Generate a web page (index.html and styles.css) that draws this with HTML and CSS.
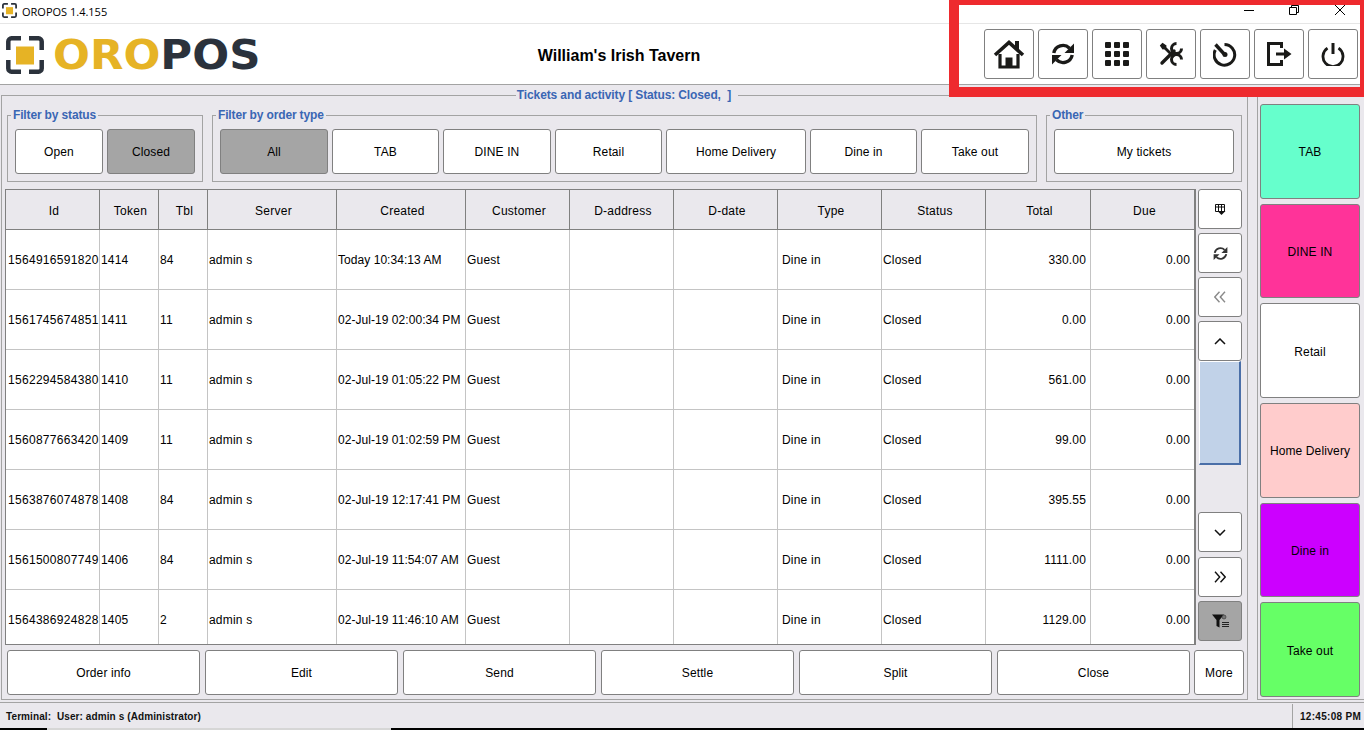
FILE: index.html
```html
<!DOCTYPE html>
<html lang="en">
<head>
<meta charset="utf-8">
<title>OROPOS 1.4.155</title>
<link rel="stylesheet" href="styles.css">
</head>
<body>
<svg class="defs" width="0" height="0" aria-hidden="true">
  <symbol id="logo-mark" viewBox="0 0 38 38">
    <path d="M2.3 14V5.5a3.2 3.2 0 0 1 3.2-3.2H15M23 2.300H32.500a3.2 3.2 0 0 1 3.2 3.200V14M35.700 24V32.500a3.200 3.200 0 0 1-3.200 3.200H23M15 35.700H5.500a3.200 3.200 0 0 1-3.200-3.200V24" fill="none" stroke="#2b323c" stroke-width="4.500"/>
    <rect x="10" y="10.500" width="18" height="18" fill="#e6b325"/>
  </symbol>
</svg>
<div class="app">
  <div class="titlebar">
    <svg class="title-icon"><use href="#logo-mark"/></svg>
    <span class="title-text">OROPOS 1.4.155</span>
    <div class="winctl">
      <span class="winbtn"><svg width="10" height="10" viewBox="0 0 10 10"><path d="M0 5.500H10" stroke="#000" fill="none"/></svg></span>
      <span class="winbtn"><svg width="10" height="10" viewBox="0 0 10 10"><path d="M.5 2.500H7.500V9.500H.5ZM2.500 2.500V.5H9.500V7.500H7.500" stroke="#000" fill="none"/></svg></span>
      <span class="winbtn"><svg width="10" height="10" viewBox="0 0 10 10"><path d="M0 0L10 10M10 0L0 10" stroke="#000" stroke-width="1" fill="none"/></svg></span>
    </div>
  </div>
  <header class="header">
    <div class="logo">
      <svg class="logo-mark"><use href="#logo-mark"/></svg>
      <span class="logo-word"><span class="gold">ORO</span><span class="dark">POS</span></span>
    </div>
    <div class="venue">William's Irish Tavern</div>
    <div class="tools">
      <button class="btn tool"><svg width="32" height="30" viewBox="0 0 32 30"><path d="M2 16L16 3.500L30 16" fill="none" stroke="#1a1a18" stroke-width="3.600"/><path d="M22 2H26V11L22 8Z" fill="#1a1a18"/><path d="M7 15V28H25V15" fill="none" stroke="#1a1a18" stroke-width="3.200"/><rect x="12.500" y="18.500" width="7" height="9" fill="#1a1a18"/></svg></button>
      <button class="btn tool"><svg width="24" height="24" viewBox="0 0 24 24"><path d="M2.800 11A9.300 9.300 0 0 1 18.500 6.200" fill="none" stroke="#1a1a18" stroke-width="3.400"/><path d="M23 1.500V11H13.500Z" fill="#1a1a18"/><path d="M21.200 13A9.300 9.300 0 0 1 5.500 17.800" fill="none" stroke="#1a1a18" stroke-width="3.400"/><path d="M1 22.500V13H10.500Z" fill="#1a1a18"/></svg></button>
      <button class="btn tool"><svg width="24" height="24" viewBox="0 0 24 24" fill="#1a1a18"><rect x="0" y="0" width="6" height="6" rx="1"/><rect x="9" y="0" width="6" height="6" rx="1"/><rect x="18" y="0" width="6" height="6" rx="1"/><rect x="0" y="9" width="6" height="6" rx="1"/><rect x="9" y="9" width="6" height="6" rx="1"/><rect x="18" y="9" width="6" height="6" rx="1"/><rect x="0" y="18" width="6" height="6" rx="1"/><rect x="9" y="18" width="6" height="6" rx="1"/><rect x="18" y="18" width="6" height="6" rx="1"/></svg></button>
      <button class="btn tool"><svg width="24" height="24" viewBox="0 0 24 24" fill="none" stroke="#1a1a18"><path d="M3 21L15 9" stroke-width="3.400" stroke-linecap="round"/><path d="M17.500 1.500A5 5 0 1 0 22.500 6.500" stroke-width="3"/><path d="M3.500 3.500L15 15" stroke-width="2.800"/><path d="M22.500 17.500A5 5 0 1 0 17.500 22.500" stroke-width="3"/><path d="M.8 3.500L3.500 .8L7.500 3.500L7 7L3.500 7.500Z" fill="#1a1a18" stroke="none"/></svg></button>
      <button class="btn tool"><svg width="24" height="25" viewBox="0 0 24 25"><path d="M11.500 2.500A10.300 10.300 0 1 1 2.300 8" fill="none" stroke="#1a1a18" stroke-width="3"/><path d="M2.500 2.500L12 13" stroke="#1a1a18" stroke-width="3.400" fill="none"/><circle cx="12" cy="12.500" r="2.500" fill="#1a1a18"/></svg></button>
      <button class="btn tool"><svg width="25" height="24" viewBox="0 0 25 24"><path d="M14.500 6V1.500H1.500V22.500H14.500V18" fill="none" stroke="#1a1a18" stroke-width="3"/><path d="M9 10.500H17V6.500L24.500 12L17 17.500V13.500H9Z" fill="#1a1a18"/></svg></button>
      <button class="btn tool"><svg width="24" height="24" viewBox="0 0 24 24"><path d="M6.500 6.200A10 10 0 1 0 17.500 6.200" fill="none" stroke="#1a1a18" stroke-width="2.800"/><path d="M12 1V12" stroke="#1a1a18" stroke-width="3" fill="none"/></svg></button>
    </div>
  </header>
  <main class="main">
    <fieldset class="tickets">
      <legend class="tickets-title">Tickets and activity [ Status: Closed,&nbsp; ]</legend>
      <div class="filters">
        <fieldset class="group group-status">
          <legend>Filter by status</legend>
          <div class="group-row">
            <button class="btn flex1">Open</button>
            <button class="btn flex1 on">Closed</button>
          </div>
        </fieldset>
        <fieldset class="group group-type">
          <legend>Filter by order type</legend>
          <div class="group-row">
            <button class="btn w-all on">All</button>
            <button class="btn w-tab">TAB</button>
            <button class="btn w-all">DINE IN</button>
            <button class="btn w-tab">Retail</button>
            <button class="btn w-home">Home Delivery</button>
            <button class="btn w-tab">Dine in</button>
            <button class="btn w-all">Take out</button>
          </div>
        </fieldset>
        <fieldset class="group group-other">
          <legend>Other</legend>
          <div class="group-row">
            <button class="btn flex1">My tickets</button>
          </div>
        </fieldset>
      </div>
      <div class="middle">
        <div class="table-wrap">
          <table class="grid">
            <colgroup>
              <col class="c-id"><col class="c-token"><col class="c-tbl"><col class="c-wide"><col class="c-wide"><col class="c-std"><col class="c-std"><col class="c-std"><col class="c-std"><col class="c-std"><col class="c-total"><col class="c-std">
            </colgroup>
            <thead>
              <tr><th>Id</th><th>Token</th><th>Tbl</th><th>Server</th><th>Created</th><th>Customer</th><th>D-address</th><th>D-date</th><th>Type</th><th>Status</th><th>Total</th><th>Due</th></tr>
            </thead>
            <tbody>
              <tr><td class="id">1564916591820</td><td>1414</td><td>84</td><td>admin s</td><td class="created">Today 10:34:13 AM</td><td>Guest</td><td></td><td></td><td class="type">Dine in</td><td>Closed</td><td class="num">330.00</td><td class="num">0.00</td></tr>
              <tr><td class="id">1561745674851</td><td>1411</td><td>11</td><td>admin s</td><td class="created">02-Jul-19 02:00:34 PM</td><td>Guest</td><td></td><td></td><td class="type">Dine in</td><td>Closed</td><td class="num">0.00</td><td class="num">0.00</td></tr>
              <tr><td class="id">1562294584380</td><td>1410</td><td>11</td><td>admin s</td><td class="created">02-Jul-19 01:05:22 PM</td><td>Guest</td><td></td><td></td><td class="type">Dine in</td><td>Closed</td><td class="num">561.00</td><td class="num">0.00</td></tr>
              <tr><td class="id">1560877663420</td><td>1409</td><td>11</td><td>admin s</td><td class="created">02-Jul-19 01:02:59 PM</td><td>Guest</td><td></td><td></td><td class="type">Dine in</td><td>Closed</td><td class="num">99.00</td><td class="num">0.00</td></tr>
              <tr><td class="id">1563876074878</td><td>1408</td><td>84</td><td>admin s</td><td class="created">02-Jul-19 12:17:41 PM</td><td>Guest</td><td></td><td></td><td class="type">Dine in</td><td>Closed</td><td class="num">395.55</td><td class="num">0.00</td></tr>
              <tr><td class="id">1561500807749</td><td>1406</td><td>84</td><td>admin s</td><td class="created">02-Jul-19 11:54:07 AM</td><td>Guest</td><td></td><td></td><td class="type">Dine in</td><td>Closed</td><td class="num">1111.00</td><td class="num">0.00</td></tr>
              <tr><td class="id">1564386924828</td><td>1405</td><td>2</td><td>admin s</td><td class="created">02-Jul-19 11:46:10 AM</td><td>Guest</td><td></td><td></td><td class="type">Dine in</td><td>Closed</td><td class="num">1129.00</td><td class="num">0.00</td></tr>
            </tbody>
          </table>
        </div>
        <div class="side">
          <button class="btn sbtn"><svg width="11" height="11" viewBox="0 0 11 11"><path d="M.5 .5H9.500V7.500H.5ZM.5 3H9.500M3.500 .5V7.500M6.500 .5V7.500" fill="none" stroke="#111" stroke-width="1"/><path d="M2.500 7H10.500L6.500 11Z" fill="#111"/></svg></button>
          <button class="btn sbtn"><svg width="15" height="15" viewBox="0 0 24 24"><path d="M2.800 11A9.300 9.300 0 0 1 18.500 6.200" fill="none" stroke="#333" stroke-width="3"/><path d="M23 1.500V11H13.500Z" fill="#333"/><path d="M21.200 13A9.300 9.300 0 0 1 5.500 17.800" fill="none" stroke="#333" stroke-width="3"/><path d="M1 22.500V13H10.500Z" fill="#333"/></svg></button>
          <button class="btn sbtn"><svg width="12" height="12" viewBox="0 0 12 12"><path d="M5.500 .8L.8 6L5.500 11.200M11 .8L6.300 6L11 11.200" fill="none" stroke="#8a8a8a" stroke-width="1.400"/></svg></button>
          <button class="btn sbtn"><svg width="12" height="7" viewBox="0 0 12 7"><path d="M1 6L6 1L11 6" fill="none" stroke="#111" stroke-width="1.500"/></svg></button>
          <div class="track"><div class="thumb"></div></div>
          <button class="btn sbtn sbtn-down"><svg width="12" height="7" viewBox="0 0 12 7"><path d="M1 1L6 6L11 1" fill="none" stroke="#111" stroke-width="1.500"/></svg></button>
          <button class="btn sbtn"><svg width="12" height="12" viewBox="0 0 12 12"><path d="M1 .8L5.700 6L1 11.200M6.500 .8L11.200 6L6.500 11.200" fill="none" stroke="#111" stroke-width="1.400"/></svg></button>
          <button class="btn sbtn on"><svg width="17" height="14" viewBox="0 0 17 14"><path d="M0 .5H12L7.500 6V13.500L4.500 12V6Z" fill="#111"/><circle cx="12" cy="3" r="2" fill="#777" stroke="#333" stroke-width=".6"/><path d="M10 8.500H17M10 10.500H17M10 12.500H17" stroke="#222" stroke-width="1"/></svg></button>
        </div>
      </div>
      <div class="actions">
        <button class="btn act">Order info</button>
        <button class="btn act">Edit</button>
        <button class="btn act">Send</button>
        <button class="btn act">Settle</button>
        <button class="btn act">Split</button>
        <button class="btn act">Close</button>
        <button class="btn act-more">More</button>
      </div>
    </fieldset>
    <aside class="types">
      <button class="btn type-btn t-tab">TAB</button>
      <button class="btn type-btn t-dine">DINE IN</button>
      <button class="btn type-btn">Retail</button>
      <button class="btn type-btn t-home">Home Delivery</button>
      <button class="btn type-btn t-dinein">Dine in</button>
      <button class="btn type-btn t-take">Take out</button>
    </aside>
  </main>
  <footer class="status">
    <span class="status-text">Terminal:&nbsp; User: admin s (Administrator)</span>
    <span class="clock">12:45:08 PM</span>
  </footer>
  <div class="strip"><span class="strip-seg"></span></div>
</div>
<div class="highlight"></div>
</body>
</html>
```
FILE: styles.css
```css
* { box-sizing: border-box; }
html, body { margin: 0; padding: 0; height: 100%; }
body { width: 1364px; height: 730px; overflow: hidden; position: relative; background: #eae8ed; font-family: "Liberation Sans", Arial, sans-serif; font-size: 12px; color: #000; }
.defs { position: absolute; }
.app { display: flex; flex-direction: column; width: 1364px; height: 730px; }

.titlebar { height: 24px; flex: none; display: flex; align-items: center; background: #fff; border-bottom: 1px solid #e6e6e6; padding-left: 2px; }
.title-icon { width: 15px; height: 15px; flex: none; margin-top: -2px; }
.title-text { font-family: "Open Sans", "Noto Sans", sans-serif; font-size: 11px; margin-left: 5px; margin-top: -1px; color: #000; }
.winctl { margin-left: auto; margin-right: 1px; display: flex; margin-top: -3px; }
.winbtn { width: 46px; height: 20px; display: flex; align-items: center; justify-content: center; }
.winbtn:first-child { width: 45px; }

.header { height: 61px; flex: none; display: flex; align-items: center; background: #fff; border-bottom: 1px solid #a3a3a3; }
.logo { width: 248px; margin: 2px 0 0 6px; flex: none; display: flex; align-items: center; height: 58px; white-space: nowrap; }
.logo-mark { width: 38px; height: 38px; flex: none; }
.logo-word { font-family: "DejaVu Sans", sans-serif; font-weight: 700; font-size: 41px; line-height: 58px; margin-left: 9px; transform: scaleX(1.06); transform-origin: left center; }
.gold { color: #e6b325; }
.dark { color: #2b323c; }
.venue { flex: 1; text-align: center; font-weight: 700; font-size: 16px; padding-top: 4px; }
.tools { display: flex; gap: 4px; width: 380px; flex: none; }

.btn { background: #fff; border: 1px solid #808080; border-radius: 3px; padding: 0; margin: 0; font: inherit; color: #000; letter-spacing: .12px; display: flex; align-items: center; justify-content: center; }
.btn.on { background: #a5a5a5; }
.tool { width: 50px; height: 50px; flex: none; }

.main { height: 617px; flex: none; display: flex; padding-top: 3px; padding-left: 1px; }
fieldset { margin: 0; min-width: 0; }
.tickets { width: 1247px; height: 612px; flex: none; border: 1px solid #a3a3a3; padding: 6px 0 0 5px; }
.tickets-title { margin: 0 auto; position: relative; left: -3px; padding: 0 4px; font-weight: 700; color: #3a66b4; line-height: 14px; letter-spacing: -.12px; }
.filters { display: flex; gap: 9px; height: 74px; }
.group { height: 74px; border: 1px solid #a3a3a3; padding: 7px 7px 0; flex: none; }
.group legend { margin-left: -4px; padding: 0 2px; font-weight: 700; color: #3a66b4; line-height: 14px; letter-spacing: -.15px; }
.group-status, .group-other { width: 196px; }
.group-type { width: 825px; }
.group-row { display: flex; gap: 4px; height: 45px; }
.flex1 { flex: 1; }
.w-all { width: 108px; flex: none; }
.w-tab { width: 107px; flex: none; }
.w-home { width: 140px; flex: none; }

.middle { display: flex; margin: 7px 0 0 -2px; height: 456px; }
.table-wrap { width: 1191px; height: 456px; flex: none; overflow: hidden; border: 1px solid #808080; border-right-width: 2px; background: #fff; }
.grid { table-layout: fixed; width: 1189px; border-collapse: separate; border-spacing: 0; }
.c-id { width: 94px; }
.c-token { width: 59px; }
.c-tbl { width: 49px; }
.c-wide { width: 129px; }
.c-std { width: 104px; }
.c-total { width: 105px; }
.grid th { height: 40px; padding: 2px 0 0 3px; font-weight: 400; background: #eae8ed; border-right: 1px solid #808080; border-bottom: 1px solid #808080; letter-spacing: .25px; }
.grid td { height: 60px; padding: 0 0 0 1px; background: #fff; border-right: 1px solid #c4c4c4; border-bottom: 1px solid #c4c4c4; white-space: nowrap; overflow: hidden; letter-spacing: .2px; }
.grid th:last-child, .grid td:last-child { border-right: none; }
.grid td.id { padding-left: 2px; letter-spacing: .3px; }
.grid td.created { letter-spacing: .05px; }
.grid td.type { padding-left: 4px; }
.grid td.num { padding-left: 0; padding-right: 4px; text-align: right; letter-spacing: .15px; }
.grid td.num:last-child { padding-right: 5px; }

.side { width: 44px; margin-left: 2px; display: flex; flex-direction: column; gap: 4px; padding-bottom: 4px; }
.sbtn { width: 44px; height: 40px; flex: none; }
.sbtn-down { margin-bottom: 1px; }
.track { flex: 1; margin: -4px 0 4px; }
.thumb { height: 104px; margin: 0 1px; background: #c1d2e8; border: 1px solid #fff; border-right: 2px solid #4a6fa8; border-bottom: 2px solid #4a6fa8; }

.actions { display: flex; margin-top: 5px; height: 45px; gap: 5px; }
.act { width: 193px; flex: none; }
.act-more { width: 50px; flex: none; margin-left: -1px; }

.types { width: 107px; height: 606px; margin: 6px 0 0 9px; flex: none; border: 1px solid #a3a3a3; border-right: none; padding: 9px 0 2px 2px; display: grid; grid-template-rows: repeat(6, 1fr); gap: 5px; }
.type-btn { width: 100px; padding-top: 2px; }
.t-tab { background: #66ffcc; }
.t-dine { background: #ff3399; }
.t-home { background: #ffcccc; }
.t-dinein { background: #cc00ff; }
.t-take { background: #66ff66; }

.status { height: 26px; flex: none; display: flex; align-items: center; border-top: 1px solid #a3a3a3; font-size: 10px; font-weight: 700; color: #111; letter-spacing: .1px; white-space: nowrap; }
.status-text { margin-left: 6px; padding-top: 1px; }
.clock { margin-left: auto; width: 72px; height: 24px; display: flex; align-items: center; padding: 1px 0 0 7px; border-left: 1px solid #a3a3a3; letter-spacing: .3px; }

.strip { height: 2px; flex: none; background: #000; }
.strip-seg { display: block; width: 344px; height: 2px; margin-left: 47px; background: #d6d6d6; }

.highlight { position: absolute; left: 949px; top: 0; right: 0; height: 97px; border: solid #ee2a2e; border-width: 5px 4px 10px 10px; pointer-events: none; }
```
